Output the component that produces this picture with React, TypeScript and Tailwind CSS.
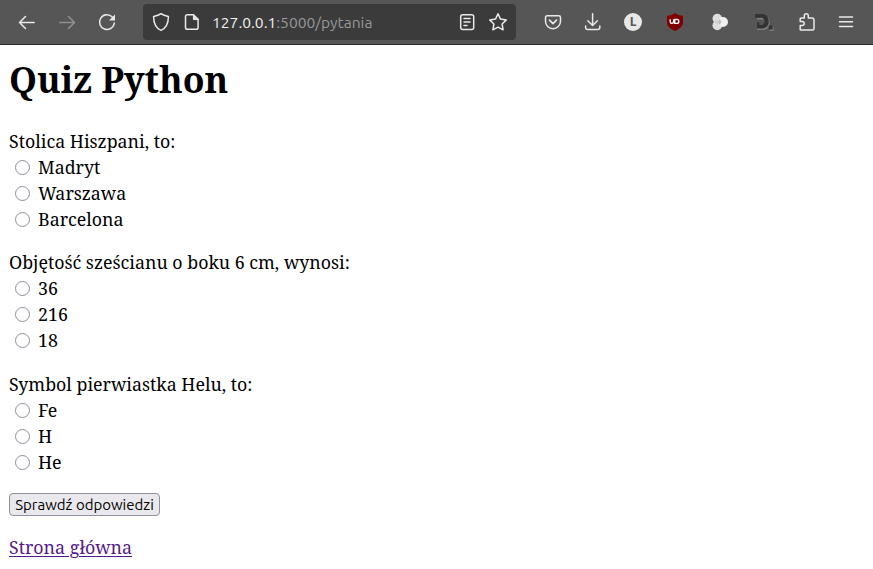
import React from "react";

const questions = [
  { text: "Stolica Hiszpani, to:", gap: "mb-[17px]", answers: ["Madryt", "Warszawa", "Barcelona"] },
  { text: "Objętość sześcianu o boku 6 cm, wynosi:", gap: "mb-[18px]", answers: ["36", "216", "18"] },
  { text: "Symbol pierwiastka Helu, to:", gap: "mb-[18px]", answers: ["Fe", "H", "He"] },
];

function Icon({ children, className = "" }: { children: React.ReactNode; className?: string }) {
  return (
    <svg
      viewBox="0 0 20 20"
      className={`h-5 w-5 shrink-0 fill-none stroke-[#e9e9e9] stroke-[1.5] ${className}`}
      strokeLinecap="round"
      strokeLinejoin="round"
    >
      {children}
    </svg>
  );
}

function Toolbar() {
  return (
    <header className="flex h-[45px] shrink-0 items-start border-b border-[#29292a] bg-[#565656] pt-1">
      <div className="flex h-9 w-[143px] items-center pl-[17px]">
        <Icon><path d="M17.2 10.5H2.8M8.5 4.5l-6 6 6 6" /></Icon>
        <Icon className="ml-5 opacity-40"><path d="M2.8 10.5h14.4M11.5 4.5l6 6-6 6" /></Icon>
        <Icon className="ml-5">
          <path d="M15.3 5A7.4 7.4 0 1 0 17.3 11" />
          <path d="M18 2.5v6h-6z" fill="#e9e9e9" stroke="none" />
        </Icon>
      </div>
      <div className="flex h-9 w-[373px] items-center rounded bg-[#3b3b3b] pl-2 pr-2">
        <Icon><path d="M10 1.7C8 3.3 5.5 4 2.6 4.5C2.6 11.5 4.5 16 10 18.4C15.5 16 17.4 11.5 17.4 4.5C14.5 4 12 3.3 10 1.7Z" /></Icon>
        <Icon className="ml-[11px]">
          <path d="M11.5 2.8H5.3a1.8 1.8 0 0 0-1.8 1.8v10.8a1.8 1.8 0 0 0 1.8 1.8h9a1.8 1.8 0 0 0 1.8-1.8V7.3z" />
          <path d="M11.4 3v4.6H16z" fill="#e9e9e9" strokeWidth="1" />
        </Icon>
        <div className="ml-2.5 flex-1 whitespace-pre font-['Ubuntu','Noto_Sans',sans-serif] text-[15.6px] leading-5 text-[#989898]">
          <span className="text-[#f2f2f2]">127.0.0.1</span>:5000/pytania
        </div>
        <Icon>
          <rect x="3.7" y="2.7" width="13" height="14.7" rx="2" />
          <path d="M7 6.5h6M7 10h6M7 13.5h3" />
        </Icon>
        <Icon className="ml-[11px]"><path d="M10 1.8l2.5 5.3 5.8.8-4.2 4.1 1 5.8-5.1-2.7-5.1 2.7 1-5.8-4.2-4.1 5.8-.8z" /></Icon>
      </div>
      <div className="flex h-9 flex-1 items-center pl-[27px]">
        <Icon>
          <path d="M4.2 3.7h11.6a1.7 1.7 0 0 1 1.7 1.7v3.8a7.5 7.5 0 0 1-15 0V5.4a1.7 1.7 0 0 1 1.7-1.7z" />
          <path d="M6.5 8.2l3.5 3.4 3.5-3.4" strokeWidth="1.7" />
        </Icon>
        <Icon className="ml-5"><path d="M9.6 1.8v11.4M4.8 8.7l4.8 4.8 4.8-4.8M2.6 14v1.5a2 2 0 0 0 2 2h10.2a2 2 0 0 0 2-2V14" /></Icon>
        <div className="ml-[21px] flex h-[18px] w-[18px] items-center justify-center rounded-full bg-[#e8e8e8] font-['Noto_Sans',sans-serif] text-[12px] font-bold leading-none text-[#565656]">L</div>
        <svg viewBox="0 0 20 20" className="ml-[23px] h-5 w-5">
          <path d="M10 1.1C8 2.8 5.2 3.6 2 3.7v6.5c0 4 3 6.5 8 8.8 5-2.3 8-4.8 8-8.8V3.7C14.8 3.6 12 2.8 10 1.1Z" fill="#800000" />
          <path d="M5.2 7.2v2.5a1.7 1.7 0 0 0 3.4 0V7.2M9.8 7.4h2a2 2 0 0 1 0 4h-2z" fill="none" stroke="#fff" strokeWidth="1.4" />
        </svg>
        <svg viewBox="0 0 20 20" className="ml-[25px] h-5 w-5">
          <circle cx="7.3" cy="6.6" r="4.8" fill="#dedede" />
          <circle cx="7.3" cy="13.4" r="4.8" fill="#dedede" />
          <circle cx="13" cy="10" r="5" fill="#efefef" />
          <path d="M5 9.2l3.8-2a5 5 0 0 0 0 5.6L5 10.8z" fill="#cfcfcf" />
          <path d="M9 7.3a5 5 0 0 0 0 5.4A5 5 0 0 0 11.6 10 5 5 0 0 0 9 7.3" fill="#bcbcbc" />
        </svg>
        <svg viewBox="0 0 20 20" className="ml-6 h-5 w-5">
          <path d="M3 3.5h5.2c5.2 0 7.5 2.6 7.5 7.2s-2.5 7.3-7.5 7.3H3v-4h4.5c2 0 3.3-1 3.3-3.3S9.5 7.5 7.5 7.5H3zM15.5 14.5h4V19h-4z" fill="#7c7c7c" />
          <path d="M1.2 2h6c5.2 0 7.5 2.8 7.5 7.3s-2.5 7.3-7.5 7.3H3v-6h2.4v2.3h1.8c2 0 3.2-1.2 3.2-3.4S9.2 5.8 7.2 5.8H1.2zM14.8 13.5h3.8v3.9h-3.8z" fill="#333" />
        </svg>
        <Icon className="ml-[23px]"><path d="M3.2 17.4v-3.8h2a2 2 0 0 0 0-4h-2V7.1a1 1 0 0 1 1-1h3.1V3.8a2 2 0 0 1 4 0v2.3h3.9a1.8 1.8 0 0 1 1.8 1.8v8.5a1.5 1.5 0 0 1-1.5 1.5H3.7a.5.5 0 0 1-.5-.5z" /></Icon>
        <Icon className="ml-[19px] stroke-[1.3]"><path d="M3.5 5h13M3.5 9.8h13M3.5 14.6h13" /></Icon>
      </div>
    </header>
  );
}

export default function App() {
  return (
    <div className="flex h-[569px] w-[873px] flex-col overflow-hidden bg-white font-['Noto_Serif','DejaVu_Serif_Condensed','DejaVu_Serif',serif] text-[17.8px] text-black">
      <Toolbar />
      <main className="flex flex-col items-start pl-[9px] pt-2">
        <h1 className="mb-[23px] whitespace-nowrap text-[35.6px] font-bold leading-[52px]">Quiz Python</h1>
        {questions.map((q) => (
          <section key={q.text} className={q.gap}>
            <p className="whitespace-nowrap leading-[26px]">{q.text}</p>
            {q.answers.map((a) => (
              <label key={a} className="flex h-[26px] items-center pl-1.5">
                <input type="radio" name={q.text} className="mr-2 h-[15px] w-[15px] appearance-none rounded-full border border-[#8f8f9d] bg-white" />
                <span className="leading-[26px]">{a}</span>
              </label>
            ))}
          </section>
        ))}
        <button className="h-[23px] w-[151px] whitespace-nowrap rounded border border-[#8f8f9d] bg-[#e9e9ed] font-['Ubuntu','Noto_Sans',sans-serif] text-[15px] leading-5">
          Sprawdź odpowiedzi
        </button>
        <a href="#" className="mt-[18px] leading-[26px] text-[#551a8b] underline decoration-1 underline-offset-2">Strona główna</a>
      </main>
    </div>
  );
}
